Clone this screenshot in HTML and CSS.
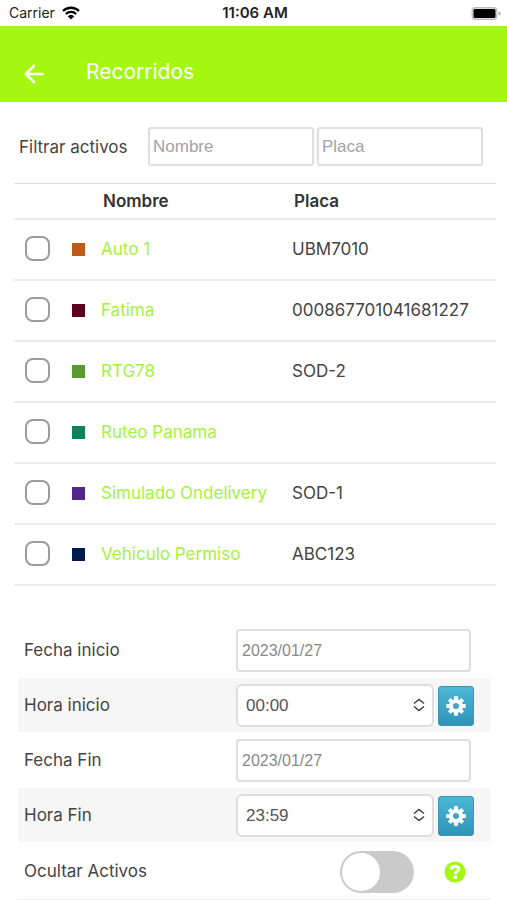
FILE: index.html
```html
<!DOCTYPE html>
<html lang="es">
<head>
<meta charset="utf-8">
<meta name="viewport" content="width=device-width, initial-scale=1">
<title>Recorridos</title>
<link rel="stylesheet" href="styles.css">
</head>
<body>
  <div class="status-bar">
    <div class="carrier">
      <span>Carrier</span>
      <svg width="18" height="14" viewBox="0 0 18 14">
        <path d="M1 5a11.500 11.500 0 0 1 16 0M3.800 8a7.500 7.500 0 0 1 10.400 0" fill="none" stroke="#000" stroke-width="2.300"/>
        <path d="M5.700 10.200a4.800 4.800 0 0 1 6.600 0L9 13.600z" fill="#000"/>
      </svg>
    </div>
    <div class="clock">11:06 AM</div>
    <svg class="battery" width="30" height="15" viewBox="0 0 30 15">
      <rect x="0.500" y="1" width="26" height="13" rx="4" fill="#bdbdbd"/>
      <rect x="1.700" y="2.200" width="23.600" height="10.600" rx="3" fill="#e4e4e4"/>
      <rect x="2.500" y="3" width="22" height="9" rx="1.500" fill="#000"/>
      <path d="M27.500 5.500q2 .6 2 2t-2 2z" fill="#a8a8a8"/>
    </svg>
  </div>

  <header class="header">
    <button class="back" aria-label="Volver">
      <svg width="20" height="20" viewBox="0 0 20 20" fill="none" stroke="#fff" stroke-width="2.500" stroke-linecap="round" stroke-linejoin="round">
        <path d="M18.500 10H2M10 1.800L1.800 10l8.200 8.200"/>
      </svg>
    </button>
    <h1>Recorridos</h1>
  </header>

  <main>
    <div class="filters">
      <label for="filter-name">Filtrar activos</label>
      <input type="text" id="filter-name" placeholder="Nombre">
      <input type="text" id="filter-plate" placeholder="Placa" aria-label="Placa">
    </div>

    <table class="assets">
      <thead>
        <tr>
          <th class="col-check"></th>
          <th class="col-color"></th>
          <th class="col-name">Nombre</th>
          <th>Placa</th>
        </tr>
      </thead>
      <tbody>
        <tr>
          <td><input type="checkbox" aria-label="Auto 1"></td>
          <td><div class="color orange"></div></td>
          <td><a href="#">Auto 1</a></td>
          <td>UBM7010</td>
        </tr>
        <tr>
          <td><input type="checkbox" aria-label="Fatima"></td>
          <td><div class="color wine"></div></td>
          <td><a href="#">Fatima</a></td>
          <td>000867701041681227</td>
        </tr>
        <tr>
          <td><input type="checkbox" aria-label="RTG78"></td>
          <td><div class="color green"></div></td>
          <td><a href="#">RTG78</a></td>
          <td>SOD-2</td>
        </tr>
        <tr>
          <td><input type="checkbox" aria-label="Ruteo Panama"></td>
          <td><div class="color teal"></div></td>
          <td><a href="#">Ruteo Panama</a></td>
          <td></td>
        </tr>
        <tr>
          <td><input type="checkbox" aria-label="Simulado Ondelivery"></td>
          <td><div class="color purple"></div></td>
          <td><a href="#">Simulado Ondelivery</a></td>
          <td>SOD-1</td>
        </tr>
        <tr>
          <td><input type="checkbox" aria-label="Vehiculo Permiso"></td>
          <td><div class="color navy"></div></td>
          <td><a href="#">Vehiculo Permiso</a></td>
          <td>ABC123</td>
        </tr>
      </tbody>
    </table>

    <form class="options">
      <div class="row">
        <label for="start-date">Fecha inicio</label>
        <div class="field"><input type="text" id="start-date" value="2023/01/27"></div>
      </div>
      <div class="row">
        <label for="start-time">Hora inicio</label>
        <div class="field">
          <div class="select">
            <select id="start-time"><option>00:00</option></select>
            <svg class="arrows" width="12" height="14" viewBox="0 0 12 14" fill="none" stroke="#444" stroke-width="1.600">
              <path d="M1 5.500l5-4 5 4M1 8.500l5 4 5-4"/>
            </svg>
          </div>
          <button type="button" class="settings" aria-label="Configurar hora inicio">
            <svg width="20" height="20" viewBox="-10 -10 20 20">
              <circle r="5" fill="none" stroke="#fff" stroke-width="4"/>
              <path d="M0-9.700V-6M0 9.700V6M-9.700 0H-6M9.700 0H6M-6.700-6.700l2.500 2.500M6.700 6.700l-2.500-2.500M-6.700 6.700l2.500-2.500M6.700-6.700l-2.500 2.500" stroke="#fff" stroke-width="4"/>
            </svg>
          </button>
        </div>
      </div>
      <div class="row">
        <label for="end-date">Fecha Fin</label>
        <div class="field"><input type="text" id="end-date" value="2023/01/27"></div>
      </div>
      <div class="row">
        <label for="end-time">Hora Fin</label>
        <div class="field">
          <div class="select">
            <select id="end-time"><option>23:59</option></select>
            <svg class="arrows" width="12" height="14" viewBox="0 0 12 14" fill="none" stroke="#444" stroke-width="1.600">
              <path d="M1 5.500l5-4 5 4M1 8.500l5 4 5-4"/>
            </svg>
          </div>
          <button type="button" class="settings" aria-label="Configurar hora fin">
            <svg width="20" height="20" viewBox="-10 -10 20 20">
              <circle r="5" fill="none" stroke="#fff" stroke-width="4"/>
              <path d="M0-9.700V-6M0 9.700V6M-9.700 0H-6M9.700 0H6M-6.700-6.700l2.500 2.500M6.700 6.700l-2.500-2.500M-6.700 6.700l2.500-2.500M6.700-6.700l-2.500 2.500" stroke="#fff" stroke-width="4"/>
            </svg>
          </button>
        </div>
      </div>
      <div class="row">
        <label for="hide-assets">Ocultar Activos</label>
        <div class="field toggle-field">
          <input type="checkbox" class="toggle" id="hide-assets">
          <button type="button" class="help" aria-label="Ayuda">
            <svg width="22" height="22" viewBox="0 0 22 22">
              <circle cx="11" cy="11" r="10.500" fill="#a4f70f"/>
              <path d="M7.300 8.500c0-4.200 7.400-4.200 7.400-.4 0 2.500-3.400 2.300-3.400 5" fill="none" stroke="#fff" stroke-width="3.100"/>
              <rect x="9.600" y="14.500" width="3.400" height="3.300" fill="#fff"/>
            </svg>
          </button>
        </div>
      </div>
    </form>
  </main>
</body>
</html>
```
FILE: styles.css
```css
* {
  box-sizing: border-box;
}

body {
  margin: 0;
  background-color: #fff;
  color: #444;
  font-family: Inter, "Liberation Sans", sans-serif;
  font-size: 17px;
  line-height: 24px;
}

button {
  padding: 0;
  border: none;
  background: none;
  cursor: pointer;
}

svg {
  display: block;
}

.status-bar {
  display: grid;
  grid-template-columns: 1fr auto 1fr;
  align-items: center;
  height: 26px;
  padding: 0 6px 0 9px;
  color: #222;
  font-size: 14px;
}

.carrier {
  display: flex;
  align-items: center;
  gap: 7px;
}

.clock {
  font-size: 15px;
  font-weight: 600;
}

.battery {
  justify-self: end;
}

.header {
  display: flex;
  align-items: center;
  gap: 42px;
  height: 76px;
  padding: 16px 24px 0;
  background-color: #a4f70f;
}

.back {
  padding-top: 4px;
}

.header h1 {
  margin: 0;
  color: #fff;
  font-size: 21px;
  font-weight: 400;
}

.filters {
  display: flex;
  align-items: center;
  gap: 3px;
  padding: 25px 24px 17px 19px;
}

.filters label {
  flex: 0 0 126px;
}

input[type="text"],
select {
  min-width: 0;
  border: 2px solid #dedede;
  border-radius: 4px;
  background-color: #fff;
  font-family: "Liberation Sans", sans-serif;
}

.filters input[type="text"] {
  flex: 1;
  height: 39px;
  padding: 0 3px;
  border-radius: 3px;
  font-size: 17px;
}

::placeholder {
  color: #a3a3a3;
  opacity: 1;
}

.assets {
  width: calc(100% - 25px);
  margin: 0 11px 0 14px;
  border-collapse: collapse;
  table-layout: fixed;
}

.assets th,
.assets td {
  padding: 0;
  border-bottom: 2px solid #ebebeb;
  text-align: left;
  white-space: nowrap;
}

.assets th {
  height: 35px;
  padding-left: 2px;
  border-top: 1px solid #dcdcdc;
  color: #333;
  font-weight: 600;
}

.assets td {
  height: 61px;
}

.col-check {
  width: 58px;
}

.col-color {
  width: 29px;
}

.col-name {
  width: 191px;
}

.assets input {
  display: block;
  appearance: none;
  width: 25px;
  height: 25px;
  margin: 0 0 2px 11px;
  border: 2px solid #9c9c9c;
  border-radius: 8px;
}

.assets a {
  color: #a4f23c;
  text-decoration: none;
}

.color {
  width: 13px;
  height: 13px;
}

.orange { background-color: #c05a18; }
.wine { background-color: #5c0022; }
.green { background-color: #5a9a32; }
.teal { background-color: #0b8558; }
.purple { background-color: #52268a; }
.navy { background-color: #001a4c; }

.options {
  margin: 37px 17px 0 18px;
}

.row {
  display: grid;
  grid-template-columns: 212px 1fr;
  align-items: center;
  height: 55px;
  padding: 0 16px 0 6px;
  border-bottom: 1px solid #fff;
}

.row:nth-child(even) {
  background-color: #f6f6f6;
}

.row:last-child {
  height: 57px;
  border-bottom-color: #eee;
}

.field {
  display: flex;
  align-items: center;
  gap: 4px;
  padding-top: 2px;
}

.field input[type="text"] {
  flex: 1;
  height: 43px;
  margin-right: 3px;
  padding: 0 4px;
  color: #888;
  font-size: 16px;
}

.select {
  position: relative;
  flex: 1;
}

select {
  display: block;
  appearance: none;
  width: 100%;
  height: 43px;
  padding: 0 8px;
  border-radius: 6px;
  color: #555;
  font-size: 17px;
}

.arrows {
  position: absolute;
  top: 14px;
  right: 9px;
  pointer-events: none;
}

.settings {
  display: flex;
  align-items: center;
  justify-content: center;
  width: 36px;
  height: 40px;
  border: 1px solid #3a96b5;
  border-radius: 3px;
  background: linear-gradient(#4cb8d6, #2f94b6);
}

.toggle-field {
  justify-content: flex-end;
  gap: 30px;
  padding-right: 8px;
}

.toggle {
  appearance: none;
  width: 74px;
  height: 42px;
  margin: 0;
  border-radius: 21px;
  background-color: #cacaca;
}

.toggle::before {
  content: "";
  display: block;
  width: 38px;
  height: 38px;
  margin: 2px;
  border-radius: 50%;
  background-color: #fff;
}
```
